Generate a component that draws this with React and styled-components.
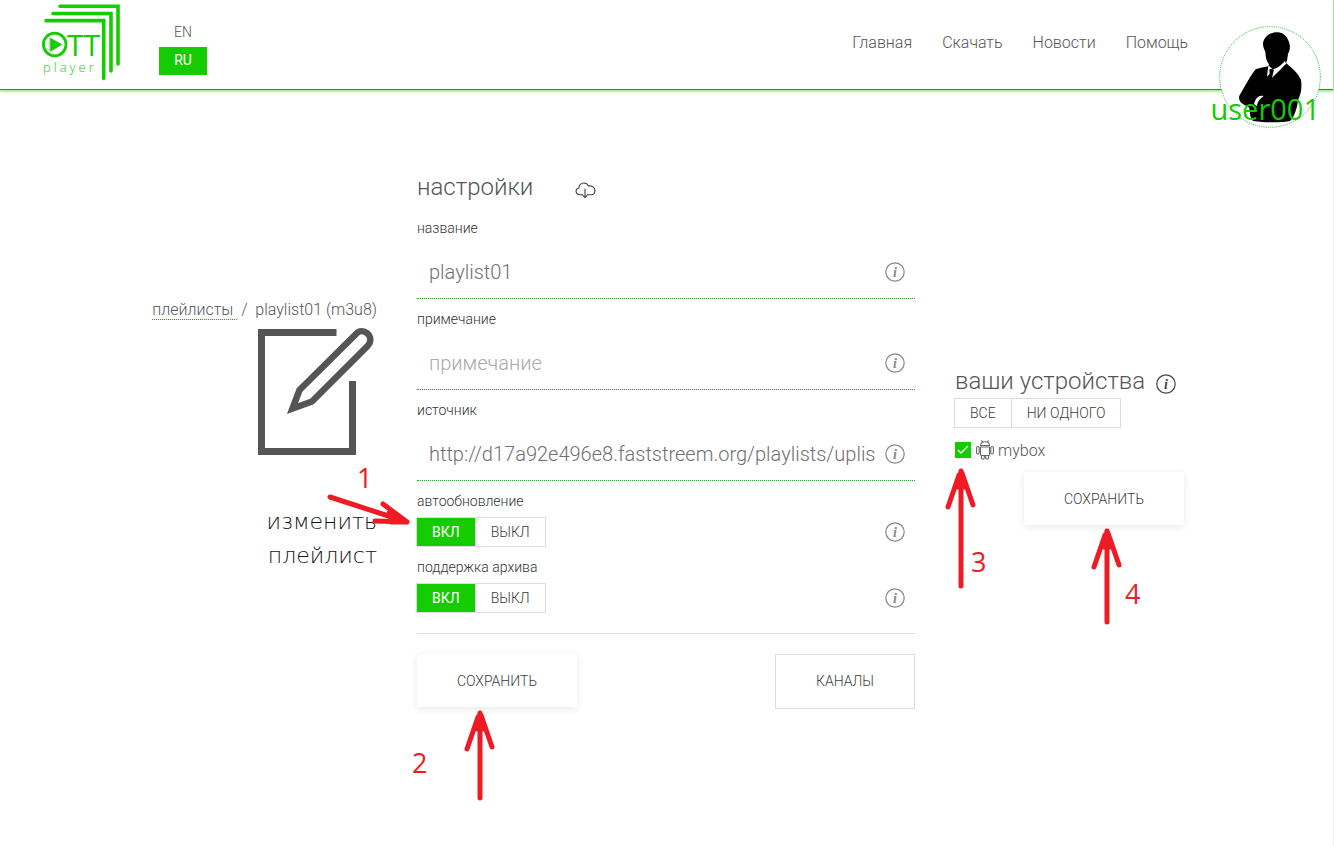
import React, { useState } from "react";
import styled, { createGlobalStyle, css } from "styled-components";

const green = "#14cc00";
const dotted = "#18a518";
const line = "#dddddd";
const red = "#ed1c24";

const GlobalStyle = createGlobalStyle`
  *, *::before, *::after { box-sizing: border-box; }
  body {
    margin: 0;
    background: #fff;
    color: #3c3c3c;
    font-family: Roboto, "Liberation Sans", sans-serif;
    font-weight: 300;
    font-size: 14px;
  }
  button, input { font: inherit; color: inherit; }
`;

const Page = styled.div`
  position: relative;
  min-height: 100vh;
  border-right: 1px solid #eee;
`;

const Header = styled.header`
  display: flex;
  align-items: flex-start;
  height: 90px;
  padding: 0 12px 0 40px;
  border-bottom: 1px solid #1f9a1f;
  box-shadow: 0 0 3px 1px rgba(20, 204, 0, 0.6);
`;

const LogoLink = styled.a`
  display: block;
  height: 84px;
`;

const Languages = styled.div`
  display: flex;
  flex-direction: column;
  margin: 19px auto 0 35px;
`;

const LanguageLink = styled.a`
  width: 48px;
  height: 28px;
  line-height: 26px;
  text-align: center;
  text-decoration: none;
  font-weight: ${(p) => (p.$active ? 400 : 300)};
  color: ${(p) => (p.$active ? "#fff" : "#555")};
  background: ${(p) => (p.$active ? green : "transparent")};
`;

const Nav = styled.nav`
  display: flex;
  gap: 30px;
  margin: 33px 31px 0 0;
`;

const NavLink = styled.a`
  font-size: 16px;
  line-height: 20px;
  color: #555;
  text-decoration: none;
`;

const UserLink = styled.a`
  position: relative;
  z-index: 1;
  display: block;
  width: 102px;
  height: 102px;
  margin-top: 26px;
  color: ${green};
  text-decoration: none;
`;

const UserName = styled.span`
  position: absolute;
  right: 1px;
  bottom: 0;
  font: 400 29px/38px "Open Sans", "Noto Sans", sans-serif;
`;

const Main = styled.main`
  display: grid;
  grid-template-columns: minmax(0, 227fr) minmax(0, 498px) minmax(0, 229fr);
  column-gap: 40px;
  align-items: center;
  padding: 80px 149px 40px 150px;
`;

const Intro = styled.section`
  display: flex;
  flex-direction: column;
  align-items: flex-end;
  padding-bottom: 8px;
`;

const Breadcrumb = styled.nav`
  font-size: 16px;
  line-height: 24px;
  color: #555;
  white-space: pre;
`;

const BreadcrumbLink = styled.a`
  color: inherit;
  text-decoration: none;
  border-bottom: 1px dotted ${dotted};
`;

const EditDrawing = styled.svg`
  display: block;
  margin: 4px 0 50px;
`;

const PageTitle = styled.h1`
  width: 114px;
  margin: 0;
  font: 200 22px/34px "DejaVu Sans", sans-serif;
  color: #111;
  text-align: right;
`;

const Heading = styled.h2`
  display: flex;
  align-items: center;
  margin: 0;
  gap: ${(p) => p.$gap};
  font-size: 24px;
  font-weight: 300;
  line-height: 34px;
  color: #555;
  & svg { position: relative; top: 3px; }
`;

const Form = styled.form`
  display: flex;
  flex-direction: column;
  gap: 8px;
`;

const FormHeading = styled(Heading)`
  margin-bottom: 4px;
`;

const Field = styled.div`
  position: relative;
  display: flex;
  flex-direction: column;
`;

const fieldLabel = css`
  line-height: 24px;
  color: #333;
`;

const Label = styled.label`
  ${fieldLabel}
`;

const GroupLabel = styled.span`
  ${fieldLabel}
  margin-bottom: 4px;
`;

const TextInput = styled.input`
  width: 100%;
  height: 59px;
  padding: 6px 40px 0 12px;
  border: 0;
  border-bottom: 1px dotted ${dotted};
  outline: 0;
  background: transparent;
  font-size: 20px;
  color: #707070;
  &::placeholder { color: #aaa; opacity: 1; }
`;

const InfoButton = styled.button`
  display: block;
  width: 20px;
  height: 20px;
  padding: 0;
  border: 0;
  background: none;
  color: ${(p) => (p.$dark ? "#444" : "#888")};
  & svg { display: block; }
  ${(p) => p.$inField && css`
    position: absolute;
    right: 10px;
    bottom: ${p.$inField === "text" ? "17px" : "5px"};
  `}
`;

const Segments = styled.div`
  display: flex;
  margin-left: -1px;
`;

const Segment = styled.button`
  height: 30px;
  padding: 0 15px;
  border: 1px solid ${line};
  background: ${(p) => (p.$active ? green : "#fff")};
  color: ${(p) => (p.$active ? "#fff" : "#3c3c3c")};
  font-weight: ${(p) => (p.$active ? 400 : 300)};
  & + & { margin-left: -1px; }
`;

const Actions = styled.div`
  display: flex;
  justify-content: space-between;
  align-items: flex-start;
  margin-top: 12px;
  padding-top: 20px;
  border-top: 1px solid ${line};
`;

const SaveButton = styled.button`
  width: 160px;
  height: 53px;
  padding: 0;
  border: 0;
  background: #fff;
  box-shadow: 0 2px 8px rgba(0, 0, 0, 0.09);
`;

const OutlineLink = styled.a`
  width: 140px;
  line-height: 53px;
  border: 1px solid ${line};
  color: inherit;
  text-align: center;
  text-decoration: none;
`;

const Devices = styled.form`
  display: flex;
  flex-direction: column;
  padding-top: 10px;
`;

const DeviceRow = styled.div`
  display: flex;
  align-items: center;
  height: 44px;
`;

const Check = styled.input`
  appearance: none;
  width: 16px;
  height: 16px;
  margin: 0 5px 0 0;
  border: 1px solid ${green};
  background: #fff;
  &:checked {
    background: ${green} url("data:image/svg+xml,%3Csvg xmlns='http://www.w3.org/2000/svg' viewBox='0 0 14 14'%3E%3Cpath d='M2 7l3 3 7-7' fill='none' stroke='white' stroke-width='1.4'/%3E%3C/svg%3E");
  }
`;

const DeviceLabel = styled.label`
  display: flex;
  align-items: center;
  gap: 4px;
  font-size: 16px;
  color: #555;
`;

const DeviceSave = styled(SaveButton)`
  align-self: flex-end;
`;

const Pointer = styled.svg`
  position: absolute;
  left: ${(p) => p.$x}px;
  top: ${(p) => p.$y}px;
  pointer-events: none;
`;

const StepNumber = styled.span`
  position: absolute;
  left: ${(p) => p.$x}px;
  top: ${(p) => p.$y}px;
  font: 400 27px/32px "Open Sans", "Noto Sans", sans-serif;
  color: ${red};
`;

function Logo() {
  return (
    <svg width="84" height="84" viewBox="40 0 84 84" fill="none" stroke={green} strokeLinecap="round" role="img" aria-label="OTT player">
      <g strokeWidth="3.6">
        <path d="M60 6.3H118V64" />
        <path d="M53 13.5H111V71" />
        <path d="M46 20.6H103.7V78.5" />
      </g>
      <circle cx="54.7" cy="44.5" r="11.3" strokeWidth="2.8" />
      <path d="M50.500 38.500L61.500 44.500L50.500 51Z" fill={green} strokeWidth="1" />
      <g fill={green} stroke="none" fontFamily='"Open Sans", sans-serif'>
        <text x="67" y="56" fontSize="30" fontWeight="400">TT</text>
        <text x="43" y="72" fontSize="13" fontWeight="300" letterSpacing="3">player</text>
      </g>
    </svg>
  );
}

function Avatar() {
  return (
    <svg width="102" height="102" viewBox="87 77 306 306" aria-hidden="true">
      <circle cx="240" cy="230" r="151" fill="#fff" stroke="#23b523" strokeWidth="3" strokeDasharray="3 3.5" />
      <path d="M260 96C239 96 221 110 219 130C219 142 224 148 226 155C227 172 230 184 237 192L234 198C220 201 202 204 196 208C184 222 164 258 148 286C145 298 150 306 160 312L178 322C180 340 180 350 188 361C200 366 280 368 300 362C314 350 322 320 324 300C334 280 336 260 333 238C322 215 304 202 288 188C292 180 293 170 294 160C302 148 301 130 294 118C288 104 276 96 260 96Z" />
      <path d="M235 195L231 229L239 220L238 207L247 206L252 208L246 232L270 209L288 190L285 181C272 197 258 206 247 206Z" fill="#fff" />
      <path d="M221 287C207 283 197 292 192 311L200 318C203 304 210 294 221 287Z" fill="#fff" />
    </svg>
  );
}

function Info({ label, dark, inField }) {
  return (
    <InfoButton type="button" aria-label={label} $dark={dark} $inField={inField}>
      <svg width="20" height="20" viewBox="0 0 20 20">
        <circle cx="10" cy="10" r="9.2" fill="none" stroke="currentColor" strokeWidth="1.2" />
        <text x="10" y="15" textAnchor="middle" fill="currentColor" fontFamily='"Liberation Serif", serif' fontStyle="italic" fontWeight="700" fontSize="14">i</text>
      </svg>
    </InfoButton>
  );
}

function CloudDownload() {
  return (
    <svg width="21" height="17" viewBox="0 0 22 18" fill="none" stroke="#444" strokeWidth="1.2" strokeLinecap="round" strokeLinejoin="round" aria-hidden="true">
      <path d="M8 13.500H5C2.700 13.500 1 12 1 9.900C1 8 2.300 6.600 4 6.400C4 3.200 6.300 1 9.200 1C11.500 1 13.300 2.200 14.200 4.200C17.800 3.600 21 5.800 21 9C21 11.600 19.200 13.500 16.800 13.500H13" />
      <path d="M10.500 7.500V16.500M8.300 14.400L10.500 16.600L12.700 14.400" />
    </svg>
  );
}

function Android() {
  return (
    <svg width="18" height="20" viewBox="0 0 18 20" fill="none" stroke="#666" strokeWidth="1.1" strokeLinejoin="round" aria-hidden="true">
      <path d="M4.500 5.500C4.500 3 6.500 1.800 9 1.800S13.500 3 13.500 5.500ZM5.500 .3L6.700 2.300M12.500 .3L11.300 2.300" />
      <path d="M4.500 7H13.500V14.500Q13.500 15.500 12.500 15.500H5.500Q4.500 15.500 4.500 14.500Z" />
      <rect x=".6" y="6.500" width="2.600" height="7.500" rx="1.200" />
      <rect x="14.800" y="6.500" width="2.600" height="7.500" rx="1.200" />
      <path d="M5.500 15.500V18.300Q7 20.200 8.300 18.300V15.500M9.700 15.500V18.300Q11 20.200 12.500 18.300V15.500" />
    </svg>
  );
}

function UpArrow({ x, y, height }) {
  return (
    <Pointer $x={x} $y={y} width="34" height={height} fill="none" stroke={red} strokeWidth="5" strokeLinecap="round" strokeLinejoin="round" aria-hidden="true">
      <path d={`M17 4V${height - 4}M4 40L15 8M29 38L18 6M17 4L14 20M17 4L20 20`} />
    </Pointer>
  );
}

function Toggle({ label }) {
  const [on, setOn] = useState(true);
  return (
    <Field role="group" aria-label={label}>
      <GroupLabel>{label}</GroupLabel>
      <Segments>
        <Segment type="button" aria-pressed={on} $active={on} onClick={() => setOn(true)}>ВКЛ</Segment>
        <Segment type="button" aria-pressed={!on} $active={!on} onClick={() => setOn(false)}>ВЫКЛ</Segment>
      </Segments>
      <Info label={label} inField="toggle" />
    </Field>
  );
}

function TextField({ id, label, value, placeholder }) {
  return (
    <Field>
      <Label htmlFor={id}>{label}</Label>
      <TextInput id={id} defaultValue={value} placeholder={placeholder} />
      <Info label={label} inField="text" />
    </Field>
  );
}

export default function App() {
  const [checked, setChecked] = useState(true);
  return (
    <Page>
      <GlobalStyle />
      <Header>
        <LogoLink href="#"><Logo /></LogoLink>
        <Languages>
          <LanguageLink href="#en">EN</LanguageLink>
          <LanguageLink href="#ru" $active>RU</LanguageLink>
        </Languages>
        <Nav>
          <NavLink href="#home">Главная</NavLink>
          <NavLink href="#download">Скачать</NavLink>
          <NavLink href="#news">Новости</NavLink>
          <NavLink href="#help">Помощь</NavLink>
        </Nav>
        <UserLink href="#user">
          <Avatar />
          <UserName>user001</UserName>
        </UserLink>
      </Header>
      <Main>
        <Intro>
          <Breadcrumb>
            <BreadcrumbLink href="#playlists">плейлисты </BreadcrumbLink>{" /  playlist01 (m3u8)"}
          </Breadcrumb>
          <EditDrawing width="120" height="129" viewBox="257 327 120 129" fill="none" stroke="#555" strokeWidth="7" aria-hidden="true">
            <path d="M336.500 333.500H261.500V452.500H352.500V382" />
            <path d="M292.500 409.500L299.500 391L356 335C359 331.500 364 331.500 367.500 334.500C371.500 338.500 371 343 368 346.500L312 402.500Z" strokeWidth="6.500" />
          </EditDrawing>
          <PageTitle>изменить плейлист</PageTitle>
        </Intro>
        <Form onSubmit={(e) => e.preventDefault()}>
          <FormHeading $gap="42px">настройки <CloudDownload /></FormHeading>
          <TextField id="name" label="название" value="playlist01" />
          <TextField id="note" label="примечание" placeholder="примечание" />
          <TextField id="source" label="источник" value="http://d17a92e496e8.faststreem.org/playlists/uplis" />
          <Toggle label="автообновление" />
          <Toggle label="поддержка архива" />
          <Actions>
            <SaveButton type="submit">СОХРАНИТЬ</SaveButton>
            <OutlineLink href="#channels">КАНАЛЫ</OutlineLink>
          </Actions>
        </Form>
        <Devices onSubmit={(e) => e.preventDefault()}>
          <Heading $gap="11px">ваши устройства <Info label="ваши устройства" dark /></Heading>
          <Segments>
            <Segment type="button" onClick={() => setChecked(true)}>ВСЕ</Segment>
            <Segment type="button" onClick={() => setChecked(false)}>НИ ОДНОГО</Segment>
          </Segments>
          <DeviceRow>
            <Check id="mybox" type="checkbox" checked={checked} onChange={(e) => setChecked(e.target.checked)} />
            <DeviceLabel htmlFor="mybox"><Android />mybox</DeviceLabel>
          </DeviceRow>
          <DeviceSave type="submit">СОХРАНИТЬ</DeviceSave>
        </Devices>
      </Main>
      <Pointer $x={325} $y={490} width="90" height="40" fill="none" stroke={red} strokeWidth="5" strokeLinecap="round" strokeLinejoin="round" aria-hidden="true">
        <path d="M5 7L82 32M58 14L82 32M50 31L82 32M64 23L82 32L66 32" />
      </Pointer>
      <StepNumber $x={357} $y={462}>1</StepNumber>
      <UpArrow x={463} y={709} height={93} />
      <StepNumber $x={412} $y={747}>2</StepNumber>
      <UpArrow x={944} y={467} height={123} />
      <StepNumber $x={971} $y={546}>3</StepNumber>
      <UpArrow x={1090} y={527} height={99} />
      <StepNumber $x={1125} $y={578}>4</StepNumber>
    </Page>
  );
}
